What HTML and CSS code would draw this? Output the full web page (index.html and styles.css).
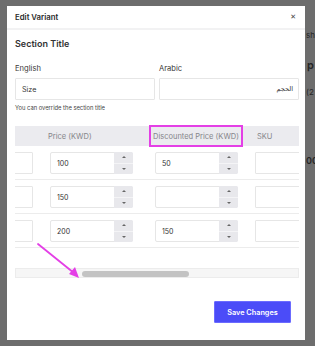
FILE: index.html
```html
<!DOCTYPE html>
<html lang="en">
<head>
<meta charset="utf-8">
<title>Edit Variant</title>
<link rel="stylesheet" href="styles.css">
</head>
<body>
<div class="backdrop">
  <div class="bg-frag bg-sh">sh</div>
  <div class="bg-frag bg-p">p</div>
  <div class="bg-frag bg-2">(2</div>
  <div class="bg-frag bg-00">00</div>
</div>
<div class="modal">
  <div class="modal-header">
    <span class="modal-title">Edit Variant</span>
    <span class="close">&#x2715;</span>
  </div>
  <div class="modal-body">
    <h2 class="section-title">Section Title</h2>
    <div class="fields">
      <div class="field">
        <label class="label">English</label>
        <div class="text-input">Size</div>
      </div>
      <div class="field">
        <label class="label">Arabic</label>
        <div class="text-input rtl" dir="rtl">الحجم</div>
      </div>
    </div>
    <p class="helper">You can override the section title</p>

    <div class="table-wrap">
      <div class="table">
        <div class="th c1"></div>
        <div class="th c2">Price (KWD)</div>
        <div class="th c3"><span class="hl">Discounted Price (KWD)</span></div>
        <div class="th c4">SKU</div>

        <div class="td c1"><div class="box"></div></div>
        <div class="td c2"><div class="num"><span class="val">100</span><span class="spin"><i class="up"></i><i class="down"></i></span></div></div>
        <div class="td c3"><div class="num"><span class="val">50</span><span class="spin"><i class="up"></i><i class="down"></i></span></div></div>
        <div class="td c4"><div class="box"></div></div>

        <div class="td c1"><div class="box"></div></div>
        <div class="td c2"><div class="num"><span class="val">150</span><span class="spin"><i class="up"></i><i class="down"></i></span></div></div>
        <div class="td c3"><div class="num"><span class="val"></span><span class="spin"><i class="up"></i><i class="down"></i></span></div></div>
        <div class="td c4"><div class="box"></div></div>

        <div class="td c1"><div class="box"></div></div>
        <div class="td c2"><div class="num"><span class="val">200</span><span class="spin"><i class="up"></i><i class="down"></i></span></div></div>
        <div class="td c3"><div class="num"><span class="val">150</span><span class="spin"><i class="up"></i><i class="down"></i></span></div></div>
        <div class="td c4"><div class="box"></div></div>
      </div>
    </div>

    <div class="scroll-track"><div class="scroll-thumb"></div></div>

    <div class="footer">
      <button class="btn">Save Changes</button>
    </div>

    <svg class="arrow" width="60" height="50" viewBox="0 0 60 50">
      <line x1="6" y1="4" x2="42" y2="33" stroke="#e43fe6" stroke-width="1.8" stroke-linecap="round"/>
      <polygon points="47,38 37,34 43,27" fill="#e43fe6"/>
    </svg>
  </div>
</div>
</body>
</html>
```

FILE: styles.css
```css
* { box-sizing: border-box; }

html, body {
  margin: 0;
  padding: 0;
}

body {
  width: 315px;
  height: 346px;
  overflow: hidden;
  background: #6d6d6d;
  padding: 6px 0 0 7px;
  font-family: Inter, "Noto Sans", "DejaVu Sans", sans-serif;
  color: #333;
  position: relative;
}

.backdrop {
  position: absolute;
  left: 306px;
  top: 0;
  width: 20px;
  height: 346px;
  color: #262626;
}

.bg-frag {
  position: absolute;
  left: 0;
  white-space: nowrap;
}
.bg-sh { top: 30px; font-size: 8px; }
.bg-p { top: 58px; font-size: 11px; font-weight: 600; left: 1px; }
.bg-2 { top: 87px; font-size: 8px; }
.bg-00 { top: 155px; font-size: 9px; font-weight: 600; }

.modal {
  position: relative;
  width: 298px;
  height: 334px;
  background: #fff;
}

.modal-header {
  height: 24px;
  padding: 0 9px 0 8px;
  display: flex;
  align-items: center;
  justify-content: space-between;
  border-bottom: 2px solid #f2f2f3;
}

.modal-title {
  font-size: 7.8px;
  font-weight: 600;
  color: #2a2a2a;
}

.close {
  font-size: 7px;
  color: #444;
  font-family: "DejaVu Sans", sans-serif;
}

.modal-body {
  position: relative;
  padding: 0 6px 0 8px;
}

.section-title {
  margin: 8px 0 0;
  font-size: 9px;
  line-height: 12px;
  font-weight: 600;
  color: #333;
}

.fields {
  margin-top: 14px;
  display: flex;
  gap: 4px;
}

.field {
  flex: 1;
  display: flex;
  flex-direction: column;
}

.label {
  font-size: 7.6px;
  line-height: 10px;
  color: #3a3a3a;
  margin-bottom: 4px;
}

.text-input {
  height: 22px;
  border: 1px solid #e6e6e6;
  border-radius: 1px;
  font-size: 7.2px;
  color: #333;
  display: flex;
  align-items: center;
  padding: 0 6px;
}

.text-input.rtl {
  font-family: "DejaVu Sans", sans-serif;
  font-size: 6.5px;
  padding: 0 5px;
}

.helper {
  margin: 4px 0 0;
  font-size: 5.8px;
  line-height: 8px;
  color: #444;
}

.table-wrap {
  margin-top: 13px;
  padding-top: 1px;
  width: 284px;
  overflow: hidden;
}

.table {
  margin-left: -93px;
  display: grid;
  grid-template-columns: 120px 105px 100px 120px;
  grid-template-rows: 20px 34px 34px 34px;
  width: 445px;
}

.th {
  background: #ebebef;
  font-size: 7.5px;
  color: #85858a;
  display: flex;
  align-items: center;
  padding-left: 6px;
  white-space: nowrap;
}

.th.c4 { padding-left: 10px; }

.hl {
  margin-left: -4px;
  height: 22px;
  display: flex;
  align-items: center;
  padding: 0 2px;
  border: 2px solid #e43fe6;
  flex-shrink: 0;
}

.td {
  border-bottom: 1px solid #ececec;
  padding: 6px 9px 0 8px;
}

.td.c2, .td.c3 { padding-right: 0; }

.box {
  height: 22px;
  border: 1px solid #e6e6e6;
  border-radius: 1px;
}

.td.c4 .box { width: 110px; }

.num {
  width: 83px;
  height: 22px;
  border: 1px solid #e6e6e6;
  border-radius: 2px;
  display: flex;
  align-items: stretch;
}

.val {
  flex: 1;
  font-size: 7px;
  color: #333;
  display: flex;
  align-items: center;
  padding-left: 6px;
}

.spin {
  width: 19px;
  display: flex;
  flex-direction: column;
  background: #e8e8ec;
  margin: -1px -1px -1px 0;
  border-radius: 0 2px 2px 0;
}

.spin i {
  flex: 1;
  display: flex;
  align-items: center;
  justify-content: center;
}

.spin i + i { border-top: 1px solid #f4f4f6; }

.spin i::before {
  content: "";
  width: 0;
  height: 0;
  border-left: 2px solid transparent;
  border-right: 2px solid transparent;
}

.spin .up::before { border-bottom: 2.5px solid #666; }
.spin .down::before { border-top: 2.5px solid #666; }

.scroll-track {
  margin-top: 20px;
  width: 284px;
  height: 10px;
  background: #f6f6f6;
  border: 1px solid #ececec;
  padding: 2px 0 0 66px;
}

.scroll-thumb {
  width: 107px;
  height: 6px;
  border-radius: 3px;
  background: #c3c3c3;
}

.footer {
  margin-top: 23px;
  display: flex;
  justify-content: flex-end;
  padding-right: 8px;
}

.btn {
  width: 77px;
  height: 22px;
  border: 1px solid #6b6bff;
  background: #4b4cf8;
  color: #fff;
  font-family: Inter, "Noto Sans", sans-serif;
  font-size: 7.3px;
  font-weight: 600;
  padding: 0;
  border-radius: 1px;
}

.arrow {
  position: absolute;
  left: 25px;
  top: 202px;
}
```
